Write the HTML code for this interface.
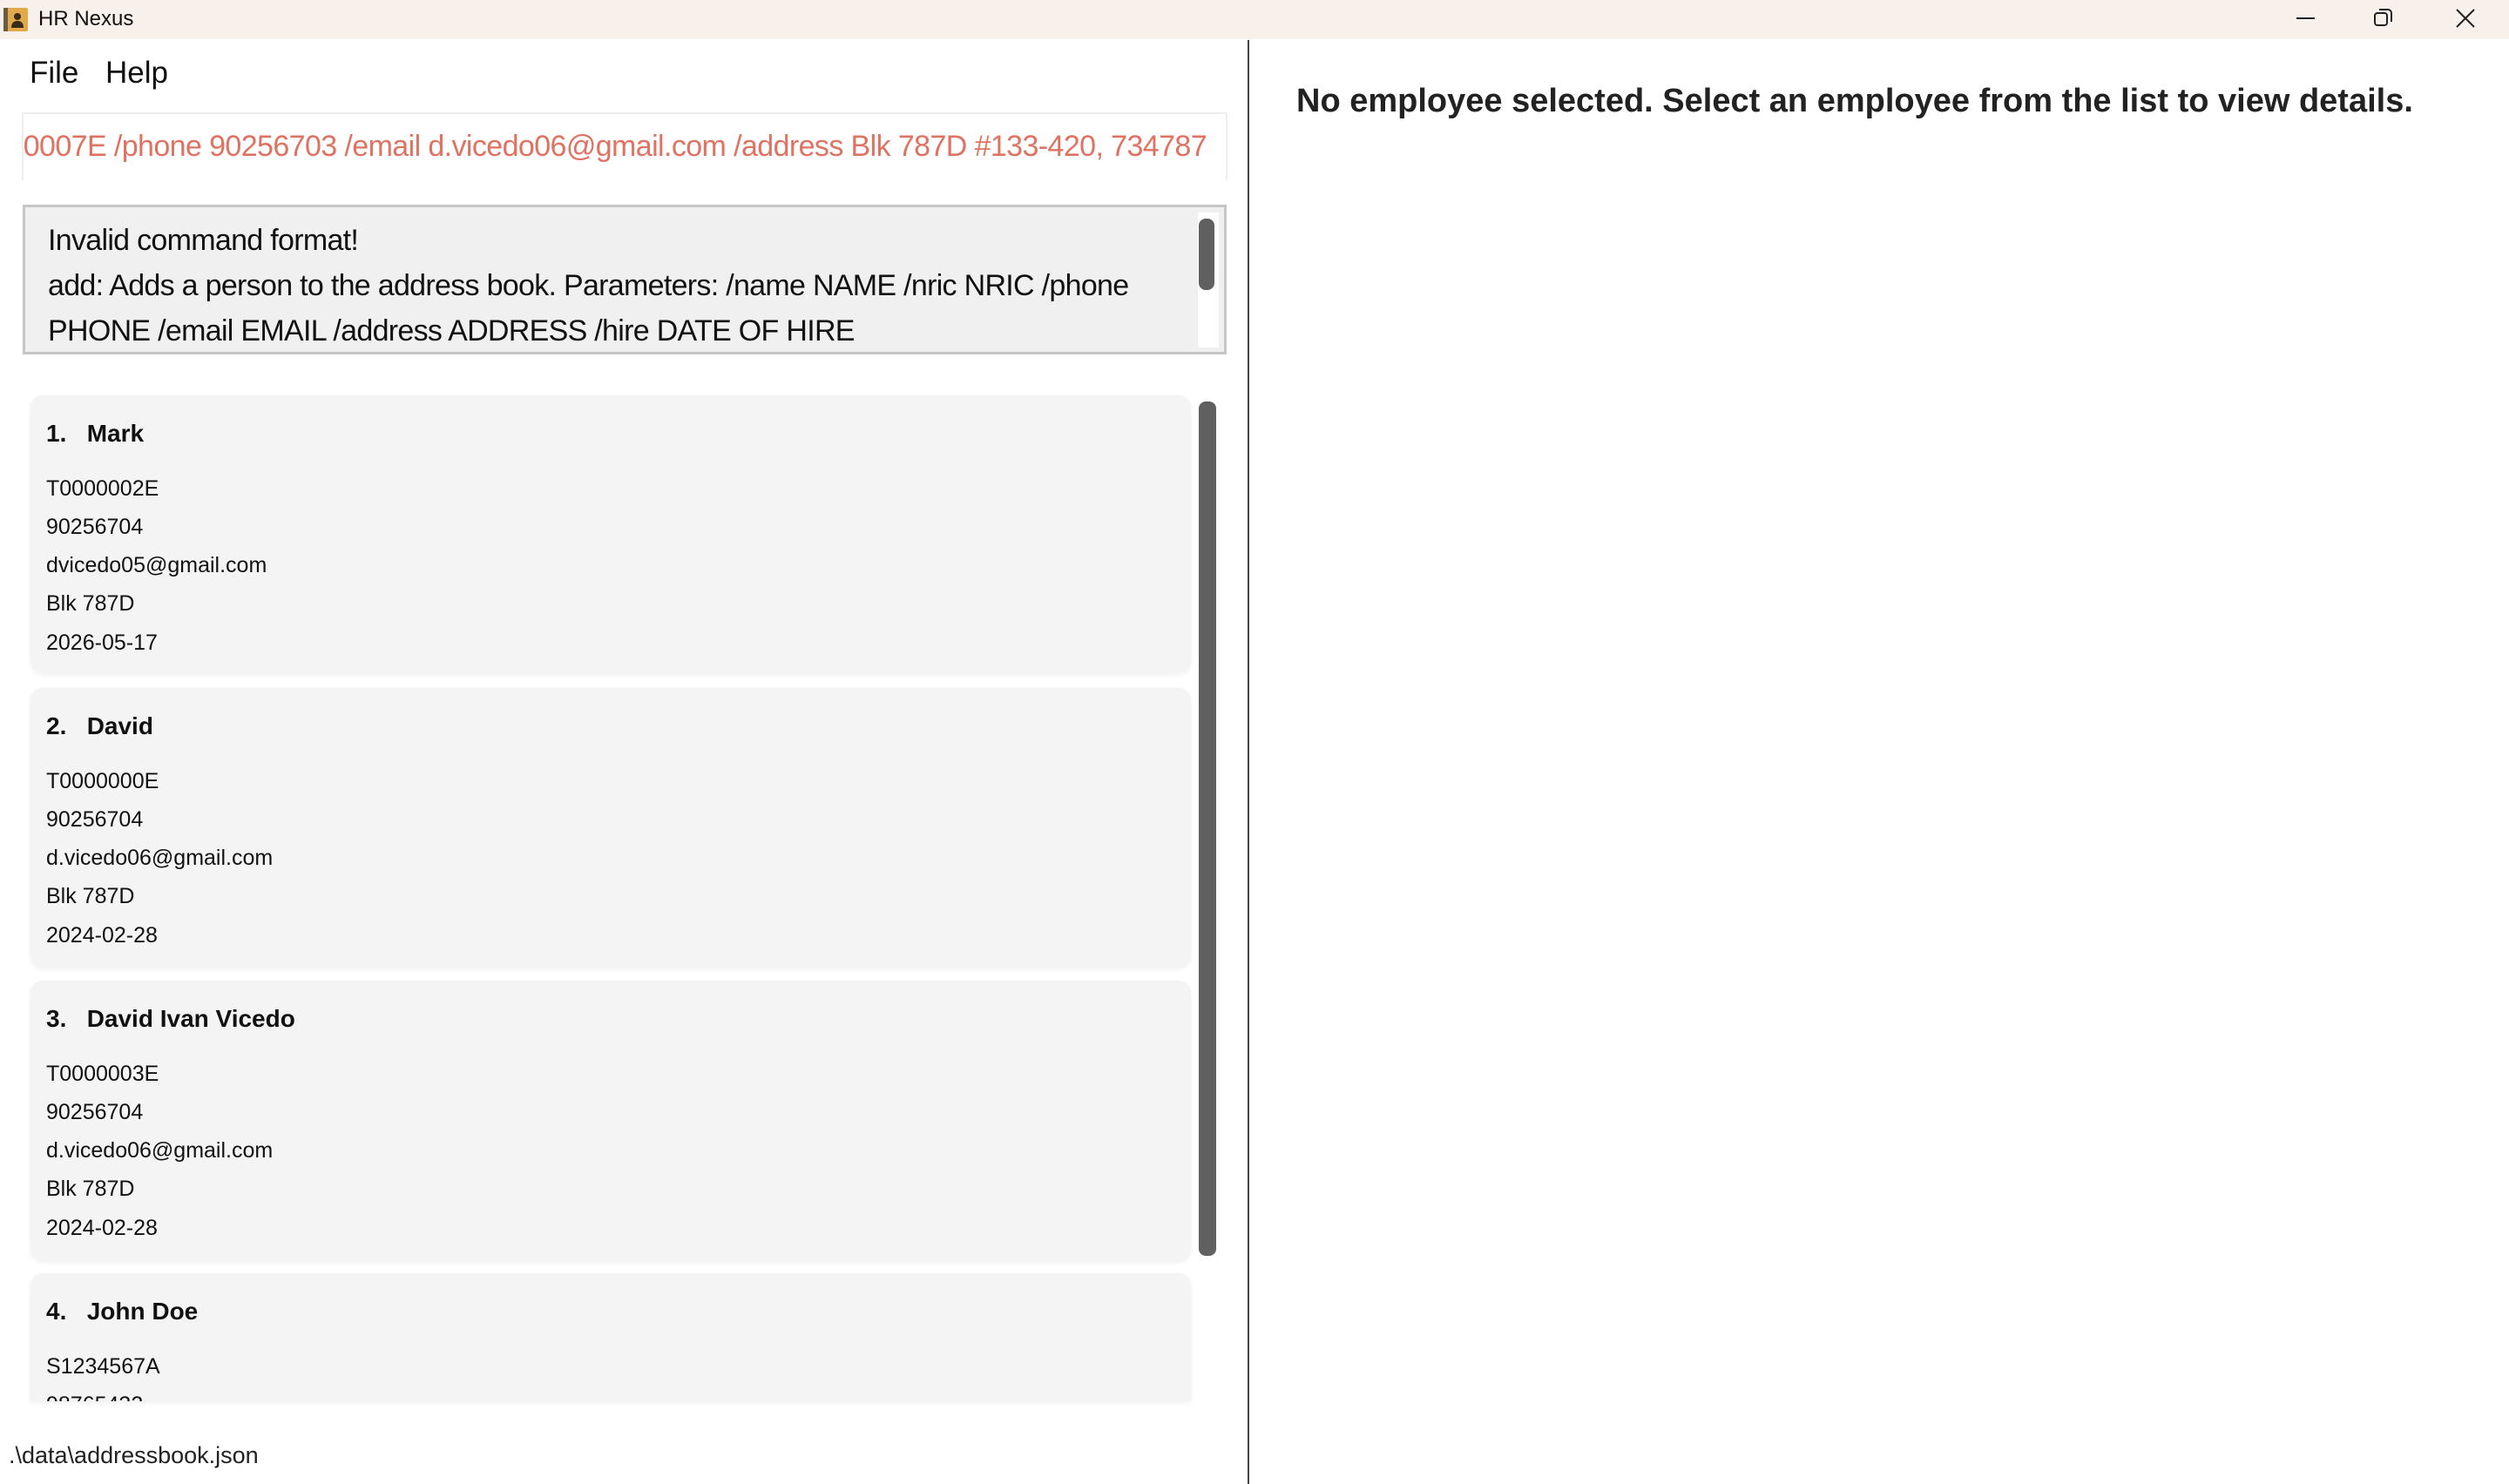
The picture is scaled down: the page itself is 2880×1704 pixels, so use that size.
<!DOCTYPE html>
<html><head><meta charset="utf-8"><style>
*{margin:0;padding:0;box-sizing:border-box}
body{width:2880px;height:1704px;overflow:hidden;background:#fff;font-family:"Liberation Sans",sans-serif;position:relative;color:#000}
.abs{position:absolute}
.title{left:0;top:0;width:2880px;height:45px;background:#f8f0ea}
.card{position:absolute;left:35px;width:1332px;background:#f4f4f4;border-radius:14px;box-shadow:0 2px 6px rgba(0,0,0,0.06);overflow:hidden}
.card .h{position:absolute;left:18px;top:28px;font-size:28px;font-weight:bold;color:#111}
.card .f{position:absolute;left:18px;font-size:25px;color:#111}
</style></head><body>
<div class="abs title"></div>
<svg class="abs" style="left:4px;top:9px" width="28" height="27" viewBox="0 0 28 27"><rect x="0" y="0" width="28" height="27" rx="2" fill="#e2a94a"/><rect x="0" y="0" width="5" height="27" fill="#6b5a45"/><circle cx="16" cy="10" r="4" fill="#3a2a18"/><path d="M9 23 Q9 15 16 15 Q23 15 23 23Z" fill="#3a2a18"/></svg>
<div class="abs" style="left:44px;top:8px;font-size:24px;color:#111">HR Nexus</div>
<div class="abs" style="left:2636px;top:20px;width:21px;height:2px;background:#222"></div>
<svg class="abs" style="left:2725px;top:9px" width="22" height="22" viewBox="0 0 22 22" fill="none" stroke="#222" stroke-width="2"><rect x="1" y="6" width="14" height="14" rx="3"/><path d="M6 2h10a4 4 0 0 1 4 4v10"/></svg>
<svg class="abs" style="left:2819px;top:10px" width="22" height="22" viewBox="0 0 22 22" stroke="#222" stroke-width="2"><path d="M1 1L21 21M21 1L1 21"/></svg>

<div class="abs" style="left:1432px;top:46px;width:2px;height:1658px;background:#444"></div>

<div class="abs" style="left:34px;top:64px;font-size:35px;color:#111">File</div>
<div class="abs" style="left:121px;top:64px;font-size:35px;color:#111">Help</div>

<div class="abs" style="left:25px;top:129px;width:1384px;height:78px;border:2px solid #eee;border-bottom:none;background:#fff;overflow:hidden">
<div class="abs" style="right:22px;top:18px;white-space:nowrap;font-size:34px;letter-spacing:-0.6px;color:#e07262">T0000007E /phone 90256703 /email d.vicedo06@gmail.com /address Blk 787D #133-420, 734787</div>
</div>

<div class="abs" style="left:26px;top:235px;width:1382px;height:172px;background:#f0f0f0;border:3px solid #c6c6c6">
<div class="abs" style="left:26px;top:12px;font-size:34px;letter-spacing:-0.7px;line-height:52px;color:#111;white-space:nowrap">Invalid command format!<br>add: Adds a person to the address book. Parameters: /name NAME /nric NRIC /phone<br>PHONE /email EMAIL /address ADDRESS /hire DATE OF HIRE</div>
<div class="abs" style="right:6px;top:6px;width:24px;height:155px;background:#fff"></div>
<div class="abs" style="right:11px;top:13px;width:18px;height:82px;background:#606060;border-radius:8px"></div>
</div>

<div class="card" style="top:454px;height:319px">
<div class="h">1.&nbsp;&nbsp;&nbsp;Mark</div>
<div class="f" style="top:93px">T0000002E</div><div class="f" style="top:137px">90256704</div><div class="f" style="top:181px">dvicedo05@gmail.com</div><div class="f" style="top:225px">Blk 787D</div><div class="f" style="top:270px">2026-05-17</div>
</div>
<div class="card" style="top:790px;height:321px">
<div class="h">2.&nbsp;&nbsp;&nbsp;David</div>
<div class="f" style="top:93px">T0000000E</div><div class="f" style="top:137px">90256704</div><div class="f" style="top:181px">d.vicedo06@gmail.com</div><div class="f" style="top:225px">Blk 787D</div><div class="f" style="top:270px">2024-02-28</div>
</div>
<div class="card" style="top:1126px;height:322px">
<div class="h">3.&nbsp;&nbsp;&nbsp;David Ivan Vicedo</div>
<div class="f" style="top:93px">T0000003E</div><div class="f" style="top:137px">90256704</div><div class="f" style="top:181px">d.vicedo06@gmail.com</div><div class="f" style="top:225px">Blk 787D</div><div class="f" style="top:270px">2024-02-28</div>
</div>
<div class="card" style="top:1462px;height:147px;border-radius:14px 14px 0 0">
<div class="h">4.&nbsp;&nbsp;&nbsp;John Doe</div>
<div class="f" style="top:93px">S1234567A</div><div class="f" style="top:137px">98765432</div>
</div>
<div class="abs" style="left:1376px;top:461px;width:20px;height:981px;background:#606060;border-radius:8px"></div>

<div class="abs" style="left:10px;top:1656px;font-size:27px;color:#222">.\data\addressbook.json</div>

<div class="abs" style="left:1488px;top:95px;font-size:38px;font-weight:bold;color:#222;white-space:nowrap">No employee selected. Select an employee from the list to view details.</div>
</body></html>
